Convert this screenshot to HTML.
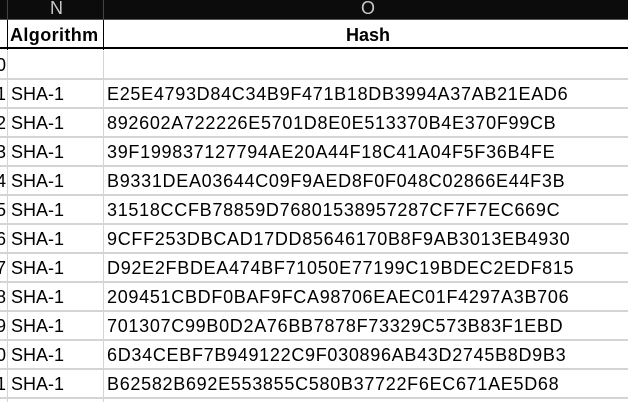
<!DOCTYPE html>
<html><head><style>
*{margin:0;padding:0;box-sizing:border-box}
body{width:628px;height:402px;overflow:hidden;background:#fff;font-family:"Liberation Sans",sans-serif;position:relative;color:#000}
.top{position:absolute;left:0;top:0;width:628px;height:20px;background:#0c0c0c;border-bottom:1px solid #555}
.top .l{position:absolute;top:-2px;color:#c8c8c8;font-size:18px}
.vl{position:absolute;top:0;width:1px;height:20px;background:#444}
.hdr{position:absolute;top:21px;height:28px;border-bottom:2px solid #000;width:628px;left:0}
.g{position:absolute;background:#d4d4d4}
.t{position:absolute;font-size:18px;line-height:20px;white-space:nowrap}
.h{letter-spacing:0.7px}
</style></head><body>
<div class="top">
<div class="vl" style="left:7px"></div><div class="vl" style="left:103px"></div>
<div class="l" style="left:50px">N</div><div class="l" style="left:361px">O</div>
</div>
<div class="hdr"></div>
<div style="position:absolute;left:7px;top:20px;width:1px;height:30px;background:#000"></div>
<div style="position:absolute;left:103px;top:20px;width:1px;height:30px;background:#000"></div>
<div class="t" style="left:10px;top:25px;font-weight:bold;letter-spacing:0.4px">Algorithm</div>
<div class="t" style="left:346px;top:25px;font-weight:bold">Hash</div>
<div id="rows"></div>
<script>
var h=["","E25E4793D84C34B9F471B18DB3994A37AB21EAD6","892602A722226E5701D8E0E513370B4E370F99CB","39F199837127794AE20A44F18C41A04F5F36B4FE","B9331DEA03644C09F9AED8F0F048C02866E44F3B","31518CCFB78859D76801538957287CF7F7EC669C","9CFF253DBCAD17DD85646170B8F9AB3013EB4930","D92E2FBDEA474BF71050E77199C19BDEC2EDF815","209451CBDF0BAF9FCA98706EAEC01F4297A3B706","701307C99B0D2A76BB7878F73329C573B83F1EBD","6D34CEBF7B949122C9F030896AB43D2745B8D9B3","B62582B692E553855C580B37722F6EC671AE5D68"];
var s="";
for(var i=0;i<12;i++){var y=51+i*29;
s+='<div class="t" style="left:-4px;top:'+(y+4)+'px">'+(i%10)+'</div>';
if(i>0){s+='<div class="t" style="left:11px;top:'+(y+4)+'px">SHA-1</div><div class="t h" style="left:107px;top:'+(y+4)+'px">'+h[i]+'</div>';}
s+='<div class="g" style="left:0;top:'+(y+27)+'px;width:628px;height:2px"></div>';}
s+='<div class="g" style="left:7px;top:51px;width:1px;height:351px"></div><div class="g" style="left:103px;top:51px;width:1px;height:351px"></div>';
document.getElementById('rows').innerHTML=s;
</script>
</body></html>
